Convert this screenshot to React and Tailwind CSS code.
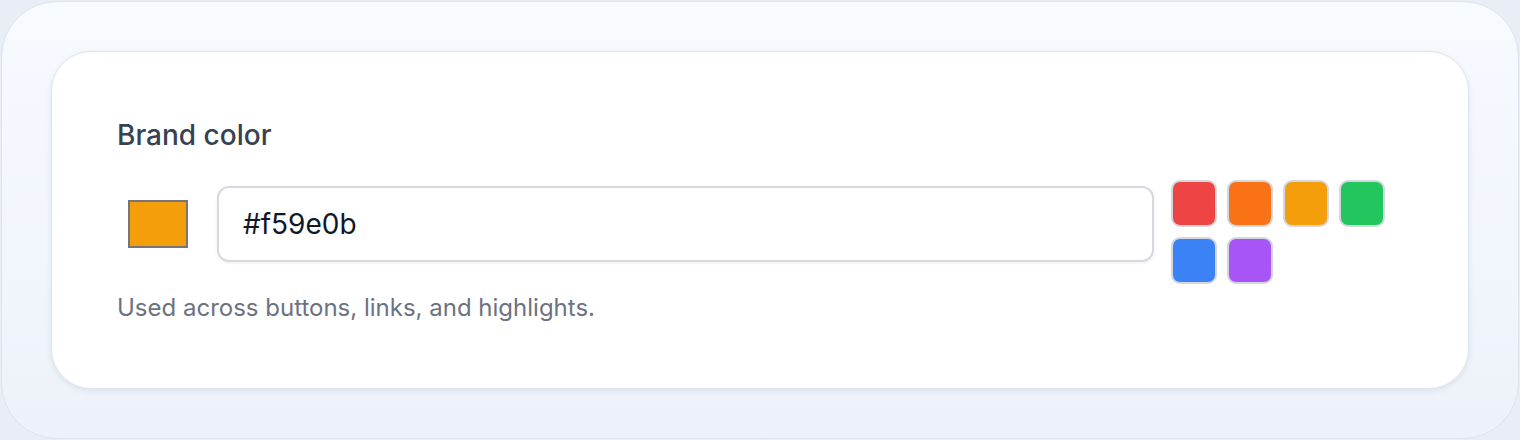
import { useState } from "react";

const presets = ["#ef4444", "#f97316", "#f59e0b", "#22c55e", "#3b82f6", "#a855f7"];

export default function App() {
  const [color, setColor] = useState("#f59e0b");

  return (
    <div className="h-[440px] bg-[#e8edf6] p-px font-['Inter',sans-serif]">
      <div className="h-full rounded-[56px] border border-[#dde4ee] bg-gradient-to-b from-[#f7faff] to-[#edf2fa] p-[49px]">
        {/* Card */}
        <div className="h-full rounded-[40px] border border-[#dfe4ec] bg-white pl-[65px] pr-[83px] pt-[63px] shadow-[0_2px_6px_rgba(15,23,42,0.08)]">
          <div className="text-[28px] leading-[40px] font-medium text-[#374151]">Brand color</div>

          <div className="mt-[25px] flex items-start">
            <div className="ml-[11px] mt-[20px] h-[48px] w-[60px] shrink-0 border-2 border-[#767676]" style={{ backgroundColor: color }} />
            <div className="ml-[29px] mt-[6px] flex h-[76px] flex-1 items-center rounded-[12px] border-2 border-[#d6dae0] bg-white pl-[24px] shadow-[0_1px_3px_rgba(15,23,42,0.08)]">
              <span className="text-[28px] text-[#111827]">{color}</span>
            </div>
            <div className="ml-[17px] grid w-[214px] shrink-0 grid-cols-4 gap-[10px]">
              {presets.map(c => (
                <button key={c} onClick={() => setColor(c)} className="h-[47px] w-[46px] rounded-[9px] border-2 border-[#d4d8de]" style={{ backgroundColor: c }} />
              ))}
            </div>
          </div>

          <div className="mt-[8px] text-[24px] leading-[32px] text-[#6b7280]">Used across buttons, links, and highlights.</div>
        </div>
      </div>
    </div>
  );
}
